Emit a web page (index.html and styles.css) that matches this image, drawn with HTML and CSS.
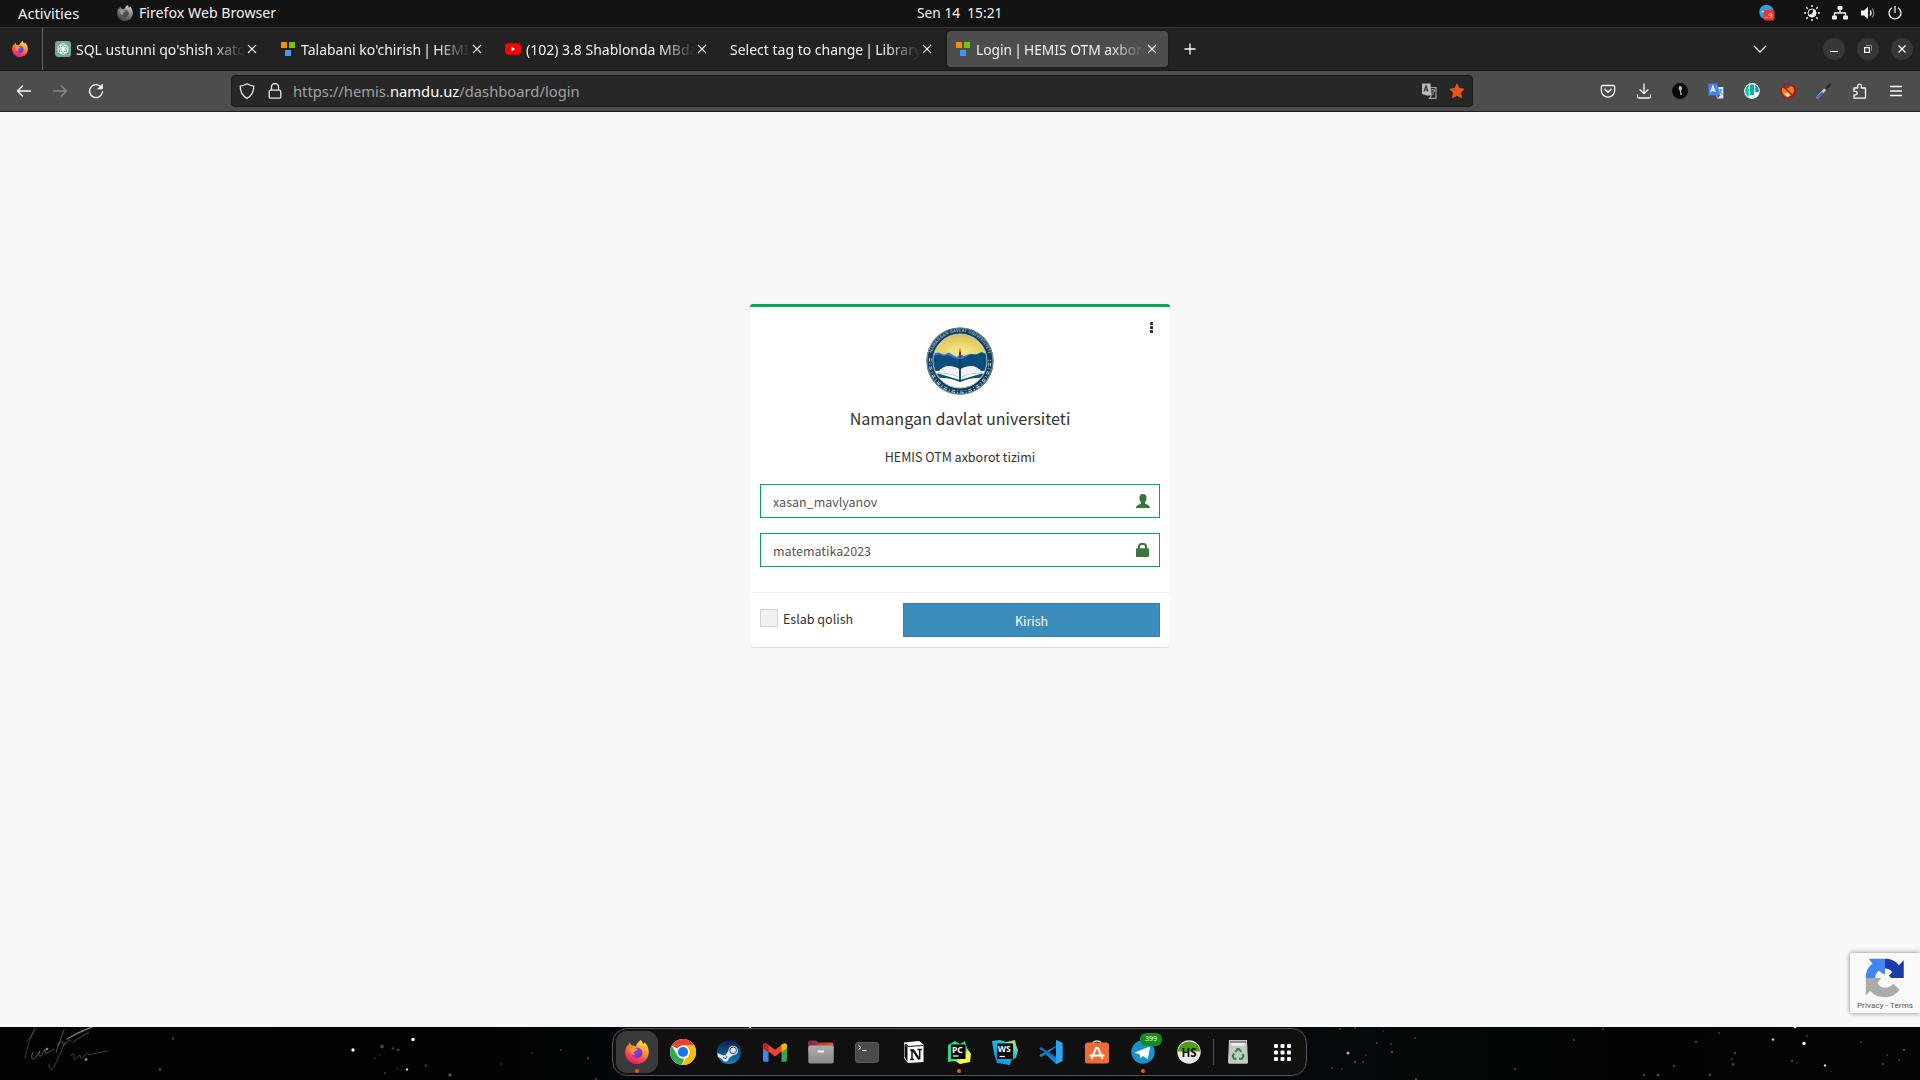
FILE: index.html
```html
<!DOCTYPE html>
<html lang="uz">
<head>
<meta charset="utf-8">
<title>Login | HEMIS OTM axborot tizimi</title>
<link rel="stylesheet" href="styles.css">
</head>
<body>
<svg width="0" height="0" class="defs">
  <defs>
    <linearGradient id="fxBody" x1=".8" y1="0" x2=".3" y2="1"><stop offset="0" stop-color="#fff44f"/><stop offset=".35" stop-color="#ffa02e"/><stop offset=".7" stop-color="#ff4a45"/><stop offset="1" stop-color="#e3158c"/></linearGradient>
    <linearGradient id="fxGlobe" x1="0" y1="0" x2="1" y2="1"><stop offset="0" stop-color="#a050f0"/><stop offset="1" stop-color="#5a35c8"/></linearGradient>
    <linearGradient id="steamBg" x1="0" y1="0" x2="0" y2="1"><stop offset="0" stop-color="#0c1b4b"/><stop offset="1" stop-color="#1483b8"/></linearGradient>
    <linearGradient id="fileTop" x1="0" y1="0" x2="1" y2="0"><stop offset="0" stop-color="#80264f"/><stop offset="1" stop-color="#e2562a"/></linearGradient>
    <linearGradient id="fileBody" x1="0" y1="0" x2="0" y2="1"><stop offset="0" stop-color="#adadad"/><stop offset="1" stop-color="#8a8a8a"/></linearGradient>
    <linearGradient id="pcBg" x1="0" y1="0" x2="1" y2="1"><stop offset="0" stop-color="#21d789"/><stop offset=".55" stop-color="#2ddb85"/><stop offset=".7" stop-color="#fcf84a"/></linearGradient>
    <linearGradient id="wsBg" x1="1" y1="0" x2="0" y2="1"><stop offset="0" stop-color="#f6f04a"/><stop offset=".35" stop-color="#17c9d6"/><stop offset="1" stop-color="#087cfa"/></linearGradient>
    <radialGradient id="sun" cx=".5" cy=".75" r=".8"><stop offset="0" stop-color="#f7ee8b"/><stop offset="1" stop-color="#d4b64c"/></radialGradient>
    <symbol id="fox" viewBox="0 0 24 24">
      <path fill="url(#fxBody)" d="M15.6 0c1.400 1.400 2.200 2.800 2.400 4.100 1-.5 1.300-1.200 1.400-1.900 2.700 2.400 4.400 6 4.400 9.800C23.800 18.600 18.500 24 12 24S.2 18.800.2 12.200c0-2.800 1-5.300 2.300-7.200.1.700.3 1.200.6 1.600.3-1.700 1-3.200 2-4.300.1 1.500.7 2.400 1.500 3.200 1.700-.2 3 .1 4.200.9 1-2.600 2.600-4.600 4.800-6.400z"/>
      <circle cx="12" cy="12.800" r="5.400" fill="url(#fxGlobe)"/>
      <path fill="#ff9a2c" d="M4.500 9c2.500-1.600 5.500-1.200 8 .6-1 1.500-2.600 1.300-3.400 2.100-.9.900-.4 2.500 1 3.100-2.700.5-5.400-1.600-5.600-5.800z"/>
    </symbol>
    <symbol id="hemis" viewBox="0 0 16 16"><path fill="#ff8c00" d="M1 1h6v6H1z"/><path fill="#73c800" d="M9 1h6v6H9z"/><path fill="#4596ee" d="M5 9h6v6H5z"/></symbol>
    <symbol id="x" viewBox="0 0 10 10"><path d="M1 1l8 8M9 1L1 9" stroke="#f0f0f0" stroke-width="1.100" fill="none"/></symbol>
  </defs>
</svg>

<header class="topbar">
  <span class="activities">Activities</span>
  <span class="app"><svg class="gray" width="16" height="16"><use href="#fox"/></svg><span>Firefox Web Browser</span></span>
  <span class="clock">Sen 14&nbsp; 15:21</span>
  <div class="tray">
    <svg width="18" height="18" viewBox="0 0 18 18"><circle cx="8.500" cy="8" r="7.300" fill="#2a9fdc"/><path d="M3 8l6-3v4z" fill="#fff"/><rect x="5.500" y="5.500" width="11" height="11" rx="2.500" fill="#e93430"/><path d="M7 13.500h1M9 13.500h1" stroke="#fff"/><text x="10.500" y="14" font-size="7" fill="#fff">9</text></svg>
    <svg class="sun" width="16" height="16" viewBox="0 0 16 16" stroke="#eee" stroke-width="1.500"><path d="M8 0v2M8 14v2M0 8h2M14 8h2M2.300 2.300l1.500 1.500M12.200 12.200l1.500 1.500M2.300 13.700l1.500-1.500M12.200 3.800l1.500-1.500"/><path d="M9 4a4.200 4.200 0 1 1-5 5.500C7 10.500 9.800 8 9 4z" fill="#eee" stroke="none"/><circle cx="8" cy="8" r="4" fill="none" stroke-width="1"/></svg>
    <svg class="net" width="16" height="16" viewBox="0 0 16 16" fill="#f2f2f2"><rect x="5.500" y="1" width="5" height="4" rx="1"/><rect x="0" y="10.500" width="5" height="4" rx="1"/><rect x="11" y="10.500" width="5" height="4" rx="1"/><path d="M8 5v3M2.500 11V8h11v3" fill="none" stroke="#f2f2f2" stroke-width="1.300"/></svg>
    <svg class="vol" width="16" height="16" viewBox="0 0 16 16"><path d="M1 5.500h3L8 2v12l-4-3.500H1z" fill="#f2f2f2"/><path d="M9.800 5.500c1.400 1.400 1.400 3.600 0 5" fill="none" stroke="#f2f2f2" stroke-width="1.400"/><path d="M12 3.500c2.500 2.500 2.500 6.500 0 9" fill="none" stroke="#777" stroke-width="1.300"/></svg>
    <svg class="pow" width="16" height="16" viewBox="0 0 16 16" fill="none" stroke="#eee" stroke-width="1.300"><path d="M8 1v7M5 2.700a6 6 0 1 0 6 0"/></svg>
  </div>
</header>

<nav class="tabs">
  <div class="pinned"><svg width="16" height="16"><use href="#fox"/></svg></div>
  <div class="tab">
    <svg width="16" height="16" viewBox="0 0 16 16"><rect width="16" height="16" rx="3" fill="#74aa9c"/><g fill="none" stroke="#fff" stroke-width=".8"><ellipse cx="8" cy="5.600" rx="2.600" ry="3"/><ellipse cx="8" cy="5.600" rx="2.600" ry="3" transform="rotate(60 8 8)"/><ellipse cx="8" cy="5.600" rx="2.600" ry="3" transform="rotate(120 8 8)"/><ellipse cx="8" cy="5.600" rx="2.600" ry="3" transform="rotate(180 8 8)"/><ellipse cx="8" cy="5.600" rx="2.600" ry="3" transform="rotate(240 8 8)"/><ellipse cx="8" cy="5.600" rx="2.600" ry="3" transform="rotate(300 8 8)"/></g></svg>
    <span class="title">SQL ustunni qo'shish xato</span><svg width="10" height="10"><use href="#x"/></svg>
  </div>
  <div class="tab"><svg width="16" height="16"><use href="#hemis"/></svg><span class="title">Talabani ko'chirish <span class="bar">|</span> HEMI</span><svg width="10" height="10"><use href="#x"/></svg></div>
  <div class="tab"><svg width="16" height="16" viewBox="0 0 16 16"><rect y="2.300" width="16" height="11.400" rx="3" fill="#f00"/><path d="M6.500 5.800v4.400L10.200 8z" fill="#fff"/></svg><span class="title">(102) 3.8 Shablonda MBda</span><svg width="10" height="10"><use href="#x"/></svg></div>
  <div class="tab"><span class="title wide">Select tag to change <span class="bar">|</span> Library</span><svg width="10" height="10"><use href="#x"/></svg></div>
  <div class="tab active"><svg width="16" height="16"><use href="#hemis"/></svg><span class="title tight">Login <span class="bar">|</span> HEMIS OTM axboro</span><svg width="10" height="10"><use href="#x"/></svg></div>
  <svg class="plus" width="12" height="12" viewBox="0 0 12 12"><path d="M6 .5v11M.5 6h11" stroke="#fff" stroke-width="1.300"/></svg>
  <div class="window">
    <svg class="chev" width="14" height="8" viewBox="0 0 14 8"><path d="M1 1l6 6 6-6" fill="none" stroke="#eee" stroke-width="1.400"/></svg>
    <svg width="22" height="22" viewBox="0 0 22 22"><circle cx="11" cy="11" r="11" fill="#373737"/><path d="M7 13.500h8" stroke="#fff"/></svg>
    <svg width="22" height="22" viewBox="0 0 22 22"><circle cx="11" cy="11" r="11" fill="#373737"/><path d="M9 7.500h5.500V13" fill="none" stroke="#888"/><rect x="7.600" y="9.600" width="4.800" height="4.800" fill="none" stroke="#fff" stroke-width="1.200"/></svg>
    <svg width="22" height="22" viewBox="0 0 22 22"><circle cx="11" cy="11" r="11" fill="#373737"/><path d="M7.500 7.500l7 7M14.500 7.500l-7 7" stroke="#fff" stroke-width="1.300"/></svg>
  </div>
</nav>

<div class="toolbar">
  <div class="navbtns">
    <svg width="16" height="16" viewBox="0 0 16 16" fill="none" stroke="#fbfbfb" stroke-width="1.300" stroke-linecap="round" stroke-linejoin="round"><path d="M1.500 8h13M6.500 3l-5 5 5 5"/></svg>
    <svg width="16" height="16" viewBox="0 0 16 16" fill="none" stroke="#8b8b8b" stroke-width="1.300" stroke-linecap="round" stroke-linejoin="round"><path d="M1.500 8h13M9.500 3l5 5-5 5"/></svg>
    <svg width="16" height="16" viewBox="0 0 16 16" fill="none" stroke="#fbfbfb" stroke-width="1.400" stroke-linecap="round"><path d="M13.500 4.500A6.500 6.500 0 1 0 14.500 9"/><path d="M14.300 1.700v4.100h-4.100z" fill="#fbfbfb" stroke-width="1"/></svg>
  </div>
  <div class="url">
    <svg width="16" height="16" viewBox="0 0 16 16" fill="none" stroke="#e8e8e8" stroke-width="1.300" stroke-linejoin="round"><path d="M8 .8c2 1.300 4.300 2 6.800 2.300 0 6-2.300 10-6.800 12.200C3.500 13.100 1.200 9.100 1.200 3.100 3.700 2.800 6 2.100 8 .8z"/></svg>
    <svg class="lock" width="16" height="16" viewBox="0 0 16 16" fill="none" stroke="#e8e8e8" stroke-width="1.300"><rect x="2.200" y="7.200" width="11.600" height="8" rx="1.500"/><path d="M4.500 7V4a3.500 3.500 0 0 1 7 0v3"/></svg>
    <span class="address">https://hemis.<b>namdu.uz</b>/dashboard/login</span>
    <svg class="translate" width="16" height="16" viewBox="0 0 16 16"><path d="M1 .5h8.500l1.300 12H6L1 11z" fill="#bababa"/><path d="M3 8.500L5 3l2 5.500M3.700 7h2.600" fill="none" stroke="#333" stroke-width="1.200"/><path d="M9.500 4.500H15v10.800H8.500l2-2.800" fill="none" stroke="#a5a5a5" stroke-width="1.200"/><text x="10.200" y="12" font-size="8" font-weight="bold" fill="#aaa">?</text></svg>
    <svg width="16" height="16" viewBox="0 0 16 16"><path fill="#e95420" stroke="#e95420" stroke-linejoin="round" d="M8 1l2.200 4.500 4.900.7-3.600 3.500.9 4.900L8 12.300l-4.400 2.300.9-4.900L.9 6.200l4.900-.7z"/></svg>
  </div>
  <div class="exts">
    <svg width="16" height="16" viewBox="0 0 16 16" fill="none" stroke="#fbfbfb" stroke-width="1.300" stroke-linecap="round" stroke-linejoin="round"><path d="M2.800 2.500h10.400c.8 0 1.500.6 1.500 1.400V7.500a6.700 6.700 0 0 1-13.400 0V3.900c0-.8.700-1.400 1.500-1.400z"/><path d="M4.800 6.300L8 9.300l3.200-3"/></svg>
    <svg width="16" height="16" viewBox="0 0 16 16" fill="none" stroke="#fbfbfb" stroke-width="1.300" stroke-linecap="round"><path d="M8 1v9.500M4 6.700l4 4 4-4M1.500 12v1.500c0 .8.700 1.500 1.500 1.500h10c.8 0 1.500-.7 1.500-1.500V12"/></svg>
    <svg width="16" height="16" viewBox="0 0 16 16"><circle cx="8" cy="8" r="7.900" fill="#080808"/><path d="M7 3.500c1.500-1 3 0 3 1.500 0 1.800-1 2.300-1 3.600L10 12H8.300L8 8 6.500 6z" fill="#b9b9b9"/></svg>
    <svg width="16" height="16" viewBox="0 0 16 16"><path d="M7 4h8.300v11.500H9z" fill="#e6e6e6"/><path d="M.5.500h8.700l3 11.800H.5z" fill="#4086f4"/><path d="M9 12.300h3.200L9.800 15z" fill="#223d80"/><path d="M2.700 9l2.200-5.800L7.200 9M3.400 7.300h3" fill="none" stroke="#fff" stroke-width="1.200"/><path d="M11 7h3.500M12.800 6v1c0 2-.8 3-1.500 3.500M12 8.500l2.500 3" stroke="#4086f4" fill="none"/></svg>
    <svg width="16" height="16" viewBox="0 0 16 16"><circle cx="8" cy="8" r="7.900" fill="#fff"/><path d="M4.800 1.900v12.200A6.900 6.900 0 0 1 4.800 1.900z" fill="#16c79a"/><path d="M5.800 1.500h4.400v10.700H5.800z" fill="#12a9a4"/><path d="M11.200 2v7.200h3.600A6.900 6.900 0 0 0 11.200 2z" fill="#1e8fc0"/><path d="M11.200 10.200h3.200a6.900 6.900 0 0 1-3.200 3.800z" fill="#dff3f0"/><path d="M5.800 13.200h4.400v1.400H7z" fill="#cdeee8"/></svg>
    <svg width="16" height="16" viewBox="0 0 16 16"><path d="M2 4.500l3 1.300 3-.5 3-2.300 2.500 1.500.5 4-2.500 4L7.500 14l-3.700-2L2 9z" fill="#e8821e"/><path d="M4 11l4-1.500 2 3-2.500 1.500z" fill="#f7ddb8"/><circle cx="8" cy="8" r="7.200" fill="none" stroke="#c40c0c" stroke-width="1.300"/><path d="M3 3l10 10" stroke="#c40c0c" stroke-width="1.300"/></svg>
    <svg width="16" height="16" viewBox="0 0 16 16" fill="none" stroke-linecap="round"><path d="M8.500 7.500l5.500-6" stroke="#26282e" stroke-width="2.500"/><path d="M1.800 14.200L8.500 7" stroke="#c5cbd8" stroke-width="2.600"/><path d="M2 14l4-4" stroke="#2f62d8" stroke-width="2"/></svg>
    <svg width="16" height="16" viewBox="0 0 16 16" fill="none" stroke="#fbfbfb" stroke-width="1.300" stroke-linejoin="round"><path d="M2 5h3.700V3a1.800 1.800 0 0 1 3.600 0v2H13.500v10.200H2v-3.400h1.500a1.700 1.700 0 0 0 0-3.400H2z"/></svg>
    <svg width="16" height="16" viewBox="0 0 16 16" stroke="#fbfbfb" stroke-width="1.300" stroke-linecap="round"><path d="M2.500 3.500h11M2.500 8h11M2.500 12.500h11"/></svg>
  </div>
</div>

<main class="page">
  <form class="card">
    <div class="card-body">
      <svg class="menu" width="3" height="11" viewBox="0 0 3 11" fill="#333"><rect width="3" height="3" rx=".5"/><rect y="4" width="3" height="3" rx=".5"/><rect y="8" width="3" height="3" rx=".5"/></svg>
      <svg class="logo" width="80" height="80" viewBox="0 0 80 80">
        <defs><path id="ring" d="M10.800 40a29.200 29.200 0 0 1 58.400 0"/><clipPath id="disc"><circle cx="40" cy="40" r="26.500"/></clipPath></defs>
        <rect width="80" height="80" fill="#fefefe"/>
        <circle cx="40" cy="40" r="33.500" fill="#123e5c"/>
        <circle cx="40" cy="40" r="33" fill="none" stroke="#6e8b9b" stroke-width="1.200"/>
        <circle cx="40" cy="40" r="27" fill="#fcfdfb" stroke="#a9bfc6" stroke-width="1"/>
        <g clip-path="url(#disc)">
          <path d="M13 12h54v26H13z" fill="url(#sun)"/>
          <path d="M13 32l6-.5 5 2 5-2 4 2.500 4 2 3-3 4 2 5-2 5 1.500 6-3 6 1v12H13z" fill="#3d76d8"/>
          <path d="M13 35l6-1.500 5 1.500 4-1 6 3 6 1.500 6-2.500 5-3 6 .5 5-2.500 5 3v16H13z" fill="#0a4f7c"/>
          <path d="M13 52l7 1 20 6 20-6 7-1v5c-9-1-19 0-27 4-8-4-18-5-27-4z" fill="#0f5674"/>
          <path d="M18 51c4-5 8-6.500 12-6 4 .3 8 1.500 10 4 2-2.500 6-3.700 10-4 4-.5 8 1 12 6-7 .3-16 1-22 5-6-4-15-4.700-22-5z" fill="#f0f4fa"/>
          <path d="M18 52c8 0 16 1 22 5 6-4 14-5 22-5" fill="none" stroke="#b8ccd2" stroke-width="1"/>
          <path d="M40 38v23" stroke="#0b4255" stroke-width="1.800"/><path d="M40 30v7" stroke="#6b3a28" stroke-width="2"/><path d="M40 27.500v3" stroke="#f08b25" stroke-width="2"/>
        </g>
        <path d="M10.500 37A29.800 29.800 0 1 0 69.500 37" fill="none" stroke="#d7e1e6" stroke-width="2.600" stroke-dasharray="3.500 2 1 2"/>
        <path d="M10.500 37A29.800 29.800 0 1 0 69.500 37" fill="none" stroke="#123e5c" stroke-width="1"/>
        <text class="ring-text"><textPath href="#ring" startOffset="8" textLength="76">NAMANGAN DAVLAT UNIVERSITETI</textPath></text>
      </svg>
      <h1>Namangan davlat universiteti</h1>
      <p class="sub">HEMIS OTM axborot tizimi</p>
      <div class="field"><span>xasan_mavlyanov</span><svg width="14" height="14" viewBox="0 0 14 14" fill="#3c763d"><path d="M7 0c2.300 0 3.600 1.600 3.600 3.900 0 1.800-.7 3.400-1.600 4.300v1.300c1.300.9 5 1.400 5 4.500H0c0-3.100 3.700-3.600 5-4.500V8.200c-.9-.9-1.600-2.500-1.600-4.300C3.400 1.600 4.700 0 7 0z"/></svg></div>
      <div class="field"><span>matematika2023</span><svg width="14" height="14" viewBox="0 0 14 14" fill="#3c763d"><path d="M0 6.500C0 5.700.4 5.300 1 5.300h1V3.600C2 1.300 3.300 0 5.300 0h2.400C9.700 0 11 1.300 11 3.600v1.700h1c.6 0 1 .4 1 1.200V13c0 .6-.4 1-1 1H1c-.6 0-1-.4-1-1zM4 5.300h5V3.800C9 2.700 8.500 2 7.500 2h-2C4.500 2 4 2.700 4 3.800z"/></svg></div>
    </div>
    <div class="card-footer">
      <label class="remember"><i></i><span>Eslab qolish</span></label>
      <button type="button">Kirish</button>
    </div>
  </form>
  <aside class="captcha">
    <svg width="40" height="40" viewBox="0 0 64 64"><path fill="#1c3aa9" d="M62 31.900V3.400l-7.800 8C47.900 3.500 39.800 1.300 32 1.300v15.300c5 0 8.500 1.500 11.500 6.200L38 28c3 2.500 3 3.900 4 3.900z"/><path fill="#4285f4" d="M32 1.300H6l6 7.500C4.500 15 1.300 22 1.300 32h15.200c0-5 1.500-8.500 5.500-11.500l8 5.500c2-.5 2-1.400 2-2.500z"/><path fill="#ababab" d="M1.300 32v28l7-7.500c7 8.500 15 10.200 23.700 10.200 9 0 17.500-4 23.500-12L45 41c-3 4.500-8 6.500-13 6.500s-10-3-12-8l6-7.500z"/></svg>
    <span>Privacy - Terms</span>
  </aside>
</main>

<footer class="desktop">
  <svg class="sky" width="1920" height="53" viewBox="0 1027 1920 53">
    <g fill="none" stroke="#8a8a8a" stroke-linecap="round" stroke-width="1">
      <path d="M35 1027c-5 12-8 20-10 31M26 1042c4-4 8-10 11-14" opacity=".4"/>
      <path d="M33 1052c-2 4-2 8 1 7 3-2 4-6 6-8-2 4-1 6 1 5l4-7c0 3 0 6 2 4l7-4M56 1052l8-22M57 1045c4-3 5-4 6-2s2 2 4-1c2-2 3-3 4-1" opacity=".6"/>
      <path d="M67 1039l11-6 14-6" opacity=".9" stroke-width="1.400"/><path d="M73 1042l16-10" opacity=".5"/>
      <path d="M65 1042c-3 8-8 18-11 25-2 4-6 2-5-3M70 1056c3-4 5-2 4 1s1 3 3 1l3-3c0 4 2 4 4 1s4-3 5-1c5-2 9-2 18-4" opacity=".45"/>
    </g>
    <g fill="#fff">
      <circle cx="353" cy="1050" r="1.700"/><circle cx="413" cy="1039.500" r="1.700"/><circle cx="407" cy="1069.500" r="1.200" opacity=".8"/><circle cx="47" cy="1049" r="1.300" opacity=".5"/><circle cx="86" cy="1059.500" r="1.500" opacity=".5"/>
      <circle cx="1348" cy="1053" r="1.500" opacity=".7"/><circle cx="1804" cy="1043.500" r="1.700"/><circle cx="1773" cy="1039.500" r="1.200" opacity=".8"/><circle cx="1825" cy="1065.500" r="1.200" opacity=".8"/><circle cx="1795" cy="1027" r="1.300"/><circle cx="750" cy="1027" r="1"/>
    </g>
    <g fill="#8f9698" opacity=".42">
      <circle cx="382" cy="1046.500" r="2"/><circle cx="393" cy="1048.500" r="1.300"/><circle cx="398" cy="1050" r="1.300"/><circle cx="160" cy="1069.500" r="1.400"/><circle cx="173" cy="1038.500" r="1.200"/><circle cx="426" cy="1065.500" r="1.200"/><circle cx="588" cy="1058" r="1.200"/><circle cx="450" cy="1075" r="1.700" fill="#8fe0e2"/><circle cx="385" cy="1073" r="1"/><circle cx="397" cy="1069" r=".8"/><circle cx="375" cy="1058" r=".8"/><circle cx="380" cy="1055" r=".8"/><circle cx="501" cy="1064" r=".9"/><circle cx="532" cy="1053" r=".8"/><circle cx="561" cy="1050" r=".9"/><circle cx="596" cy="1079" r="1.400" fill="#3c7ba0"/>
      <circle cx="1340" cy="1029" r="1"/><circle cx="1355" cy="1028" r="1"/><circle cx="1355" cy="1062" r="1.300"/><circle cx="1363" cy="1062" r="1.100"/><circle cx="1377" cy="1043" r="1.100"/><circle cx="1391" cy="1044" r="1"/><circle cx="1392" cy="1052" r="1.300"/><circle cx="1383" cy="1031" r=".8"/><circle cx="1415" cy="1038" r="1"/><circle cx="1366" cy="1055" r=".8"/><circle cx="1332" cy="1068" r=".9"/><circle cx="1342" cy="1069" r=".8"/><circle cx="1416" cy="1079" r="1.200"/><circle cx="1515" cy="1069" r="1"/><circle cx="1574" cy="1040" r="1"/><circle cx="1603" cy="1029" r="1"/><circle cx="1644" cy="1075" r="1.200"/><circle cx="1658" cy="1075" r="1.600"/><circle cx="1674" cy="1066" r="1.300"/><circle cx="1696" cy="1042" r="1.300"/><circle cx="1719" cy="1033" r=".9"/><circle cx="1733" cy="1064.500" r="1.400"/><circle cx="1735" cy="1053" r="1.200"/><circle cx="1710" cy="1075" r="1.400"/><circle cx="1732" cy="1059" r=".9"/><circle cx="1807" cy="1036" r="1"/><circle cx="1792" cy="1061" r="1.200"/><circle cx="1797" cy="1063" r=".8"/><circle cx="1861" cy="1042" r="1"/><circle cx="1883" cy="1064" r="1.100"/><circle cx="1904" cy="1050" r="1.200"/><circle cx="1899" cy="1060" r="1"/><circle cx="1887" cy="1055" r=".9"/>
    </g>
  </svg>
  <div class="dock">
    <div class="item current run"><svg width="24" height="24"><use href="#fox"/></svg></div>
    <div class="item"><svg width="26" height="26" viewBox="0 0 26 26"><circle cx="13" cy="13" r="13" fill="#fff"/><path d="M13 0c4.800 0 9 2.600 11.300 6.500H13A6.500 6.500 0 0 0 7.400 9.700L1.700 6.500A13 13 0 0 1 13 0z" fill="#ea4335"/><path d="M1.700 6.500l5.700 9.800A6.500 6.500 0 0 0 14.700 19.200L11.300 25.900A13 13 0 0 1 1.700 6.500z" fill="#34a853"/><path d="M24.300 6.500A13 13 0 0 1 11.300 25.900l7.300-9.600A6.500 6.500 0 0 0 13 6.500z" fill="#fbbc05"/><circle cx="13" cy="13" r="6.500" fill="#fff"/><circle cx="13" cy="13" r="5.100" fill="#1a73e8"/></svg></div>
    <div class="item"><svg width="24" height="24" viewBox="0 0 24 24"><circle cx="12" cy="12" r="12" fill="url(#steamBg)"/><path d="M.3 13l6.200 2.600c.6-.4 1.200-.5 2-.5l3-4.300c0-3 2-5 4.700-5A4.800 4.800 0 0 1 21 10.500c0 2.800-2.300 4.800-5 4.700l-4.200 3c0 2-1.500 3.400-3.400 3.400-1.600 0-3-1.100-3.300-2.600L.9 17z" fill="#e4e9f1"/><circle cx="16.200" cy="10.300" r="3.300" fill="none" stroke="#1e4077" stroke-width="1"/><path d="M6 17.500l2 .9a1.500 1.500 0 0 0 1-2.800" fill="none" stroke="#1e5b94"/></svg></div>
    <div class="item"><svg width="24" height="19" viewBox="0 0 24 19"><path d="M0 3l5.500 4v11.800H1.700C.7 18.800 0 18 0 17z" fill="#4285f4"/><path d="M24 3l-5.500 4v11.800h3.800c1 0 1.700-.8 1.700-1.800z" fill="#34a853"/><path d="M0 2.500C0 .5 2.300-.5 4 .8l8 6 8-6v6.700l-8 6-6.500-5L0 6z" fill="#ea4335"/><path d="M18.500 2l1.500-1.200c1.700-1.300 4-.3 4 1.700V5l-5.500 4z" fill="#fbbc04"/><path d="M0 2.500V5.500l5.500 4V2L4 .8C2.300-.5 0 .5 0 2.500z" fill="#c5221f"/></svg></div>
    <div class="item"><svg width="26" height="24" viewBox="0 0 26 24"><path d="M0 2.500C0 1.200 1 .5 2 .5h6l2 2h13.500c1.200 0 2 .8 2 2V12H0z" fill="url(#fileTop)"/><rect x=".3" y="5.500" width="25.400" height="18" rx="2" fill="url(#fileBody)"/><rect x="9.500" y="10.500" width="6.500" height="2" fill="#f2f2f2"/></svg></div>
    <div class="item"><svg width="24" height="21" viewBox="0 0 24 21"><rect x=".5" y=".5" width="23" height="20" rx="2.500" fill="#4b4b4b" stroke="#5b5b5b"/><path d="M3.500 3.500L6 5.500l-2.500 2M7 8.500h4.500" fill="none" stroke="#e9e9e9"/></svg></div>
    <div class="item notion"><svg width="20" height="22" viewBox="0 0 20 22"><path d="M0 1.500L15 0l4.500 3.500V21L4 22 0 17z" fill="#fff"/><path d="M1.500 3L4 5.500 19 4.500" fill="none" stroke="#111" stroke-width="1.200"/><path d="M.5 3v13l3 4.500V6z" fill="#111"/><path d="M6 9h3.500l5.500 8.500M6 18.500h4M8 9.500v9M13.500 8.500H18M8.500 9l6.500 9.500M15.700 9v9.500" fill="none" stroke="#111" stroke-width="1.500"/></svg></div>
    <div class="item run"><svg width="24" height="24" viewBox="0 0 24 24"><path d="M1 5l7-4 5 3 5-3 2 7 4 6-1 8-10 2-5-3-7 1z" fill="url(#pcBg)"/><rect x="4" y="4.500" width="14.500" height="14.500" fill="#050505"/><text class="ide" x="5" y="12.500">PC</text><path d="M6 16h5.500" stroke="#fff" stroke-width="1.300"/></svg></div>
    <div class="item"><svg width="26" height="26" viewBox="0 0 26 26"><path d="M0 2l8-1 6 2 9-2 1 5 2 5-2 8-5 2-1 5-13-2-3-9z" fill="url(#wsBg)"/><rect x="5" y="4.500" width="16" height="15.500" fill="#050505"/><text class="ide" x="5.800" y="13">WS</text><path d="M7.500 17.500H13" stroke="#fff" stroke-width="1.300"/></svg></div>
    <div class="item"><svg width="24" height="24" viewBox="0 0 24 24"><path d="M17 0l6.500 3v18L17 24 6.500 14 2.500 17 .5 16V15l16.500-9z" fill="#1c86d1"/><path d="M17 24l6.500-3V3L17 0z" fill="#2aa4f0"/><path d="M.5 8v1L17 19v-1.500L2.500 7z" fill="#0d6db8"/><path d="M17 7v10l-7-5z" fill="#111"/><path d="M5 12l-2.500-2.200L.7 12l1.800 2.200z" fill="#111"/></svg></div>
    <div class="item"><svg width="24" height="24" viewBox="0 0 24 24"><path d="M8 4c0-4 8-4 8 0" fill="none" stroke="#d8cfbd" stroke-width="1.500"/><rect y="2.500" width="24" height="21" rx="2.500" fill="#ee6c3a"/><path d="M6.500 19L11 8h2l4.500 11M4.500 15.500h15" fill="none" stroke="#fff" stroke-width="2"/></svg></div>
    <div class="item run"><svg width="24" height="24" viewBox="0 0 24 24"><circle cx="12" cy="12" r="11.700" fill="#1c90cb"/><path d="M4 12.500l14-5.700c.8-.2 1.200.2 1 1L17 18c-.2.800-.8.900-1.400.5l-3.500-2.500-1.800 1.700c-.5.400-.9.200-1-.4l-.6-3-4.500-1.200c-.5-.2-.6-.4-.2-.6z" fill="#fff"/></svg><span class="badge">399</span></div>
    <div class="item"><svg width="24" height="24" viewBox="0 0 24 24"><circle cx="12" cy="12" r="11.700" fill="#e9ebe8"/><path d="M.5 11.500a11.600 11.600 0 0 1 23 0z" fill="#4f9e12"/><text class="hs" x="4.500" y="16.500" textLength="15">HS</text></svg></div>
    <i class="sep"></i>
    <div class="item"><svg width="20" height="24" viewBox="0 0 20 24"><path d="M1 0h18l1 22c0 1-.7 1.800-1.600 1.800H1.600C.7 23.800 0 23 0 22z" fill="#c6c8c7"/><path d="M2 1.500h16v1.300H2z" fill="#555"/><path d="M3 2.800h14l-1 3H4z" fill="#eee"/><g fill="none" stroke="#1f8a3a" stroke-width="2"><path d="M7.500 12l2-3h1.500l2 3M14.500 14l1 2-1.500 2.800h-3M8.500 18.800H6L4.700 16l1.500-2.500"/></g></svg></div>
    <div class="apps"><svg width="17" height="17" viewBox="0 0 17 17" fill="#fff"><rect width="4" height="4" rx="1"/><rect x="6.500" width="4" height="4" rx="1"/><rect x="13" width="4" height="4" rx="1"/><rect y="6.500" width="4" height="4" rx="1"/><rect x="6.500" y="6.500" width="4" height="4" rx="1"/><rect x="13" y="6.500" width="4" height="4" rx="1"/><rect y="13" width="4" height="4" rx="1"/><rect x="6.500" y="13" width="4" height="4" rx="1"/><rect x="13" y="13" width="4" height="4" rx="1"/></svg></div>
  </div>
</footer>
</body>
</html>
```
FILE: styles.css
```css
* { box-sizing: border-box; }
body {
  margin: 0;
  width: 1920px;
  height: 1080px;
  overflow: hidden;
  display: flex;
  flex-direction: column;
  font-family: "Noto Sans", "Open Sans", sans-serif;
  background: #000;
  color: #f2f2f2;
}
svg { display: block; flex: none; }
.defs { position: absolute; }

/* Desktop top bar */
.topbar {
  flex: 0 0 27px;
  display: grid;
  grid-template-columns: 117px 800px 85px 1fr;
  align-items: center;
  background: #131313;
  font-size: 14.200px;
  line-height: 26px;
  padding-bottom: 1px;
  white-space: nowrap;
}
.activities { padding-left: 18px; font-size: 14.700px; }
.app { display: flex; align-items: center; gap: 6px; }
.gray { filter: grayscale(1) brightness(.9); }
.clock { font-size: 13.750px; }
.tray { display: flex; align-items: center; justify-content: flex-end; padding-right: 17px; }
.sun { margin-left: 28px; }
.net { margin-left: 12px; }
.vol { margin-left: 12px; }
.pow { margin-left: 11px; }

/* Tab strip */
.tabs {
  flex: 0 0 44px;
  display: flex;
  align-items: center;
  background: #222;
  border-top: 1px solid #353535;
  border-bottom: 1px solid #171717;
}
.pinned {
  width: 43px;
  height: 100%;
  display: flex;
  align-items: center;
  padding-left: 12px;
  border-right: 1px solid #666;
  margin-right: 4px;
}
.tab {
  width: 221px;
  height: 36px;
  margin-right: 4px;
  padding: 0 11px 0 8px;
  display: flex;
  align-items: center;
  border-radius: 4px;
}
.tab.active { background: #4d4d4d; box-shadow: 0 0 3px #111; }
.title {
  flex: 1;
  overflow: hidden;
  white-space: nowrap;
  margin-left: 5px;
  font-size: 14px;
  line-height: 34px;
  padding-top: 2px;
  -webkit-mask-image: linear-gradient(to left, transparent 2px, #000 36px);
  mask-image: linear-gradient(to left, transparent 2px, #000 36px);
}
.title.wide { margin-left: 0; }
.title.tight { font-size: 13.800px; }
.bar { margin: 0 -1.500px; }
.plus { margin-left: 12px; }
.window { margin-left: auto; display: flex; align-items: center; gap: 12px; padding-right: 7px; }
.chev { margin-right: 44px; }

/* Toolbar */
.toolbar {
  flex: 0 0 41px;
  display: flex;
  align-items: center;
  background: #4d4d4d;
  border-bottom: 1px solid #1c1c1c;
  padding: 0 16px;
}
.navbtns { display: flex; gap: 20px; margin-right: 127px; }
.url {
  width: 1242px;
  height: 32px;
  display: flex;
  align-items: center;
  padding: 0 7px;
  background: #272727;
  border: 1px solid #1a1a1a;
  border-radius: 4px;
}
.lock { margin-left: 12px; }
.address { flex: 1; margin-left: 10px; font-size: 14.750px; line-height: 28px; color: #a2a2a2; }
.address b { font-weight: 400; color: #fff; }
.translate { margin-right: 12px; }
.exts { display: flex; gap: 20px; margin-left: auto; }

/* Login page */
.page {
  flex: 1;
  position: relative;
  display: flex;
  flex-direction: column;
  align-items: center;
  padding-top: 192px;
  background: #f8f8f8;
  color: #333;
  font-family: "Noto Sans CJK SC", "Noto Sans", sans-serif;
  font-size: 12.500px;
}
.card {
  width: 420px;
  background: #fff;
  border-top: 3px solid #00a65a;
  border-radius: 3px;
  box-shadow: 0 1px 1px rgba(0, 0, 0, .1), 0 0 2px rgba(0, 0, 0, .05);
}
.card-body {
  position: relative;
  height: 285px;
  padding: 14px 10px 0;
  display: flex;
  flex-direction: column;
  align-items: center;
}
.menu { position: absolute; right: 17px; top: 15px; }
.ring-text { font: 700 4px "Noto Sans", sans-serif; fill: #9fb4c0; }
h1 { margin: 5px 0 0; font-size: 16.100px; font-weight: 400; line-height: 24px; }
.sub { margin: 17px 0 17px; line-height: 20px; }
.field {
  width: 400px;
  height: 34px;
  margin-bottom: 15px;
  padding: 0 10px 0 12px;
  display: flex;
  align-items: center;
  justify-content: space-between;
  border: 1px solid #00a65a;
  color: #555;
}
.field svg { margin-right: -1px; }
.card-footer {
  display: flex;
  justify-content: space-between;
  padding: 10px;
  border-top: 1px solid #f1f1f1;
}
.remember { display: flex; align-items: center; gap: 5px; height: 30px; }
.remember i { width: 18px; height: 18px; background: #f1f1f1; border: 1px solid #d2d2d2; }
button {
  width: 257px;
  height: 34px;
  border: 1px solid #367fa9;
  background: #3c8dbc;
  color: #fff;
  font: inherit;
  padding: 0;
}
.captcha {
  position: absolute;
  right: 0;
  bottom: 14px;
  width: 70px;
  height: 60px;
  padding-top: 5px;
  display: flex;
  flex-direction: column;
  align-items: center;
  background: #f9f9f9;
  border-radius: 2px 0 0 2px;
  box-shadow: 0 0 5px gray;
  font: 8px/15px Roboto, sans-serif;
  letter-spacing: .12px;
  color: #555;
}

/* Desktop and dock */
.desktop {
  flex: 0 0 53px;
  position: relative;
  display: flex;
  padding: 1px 0 0 612px;
  background: linear-gradient(90deg, #020303 0, #010202 24%, #03090c 36%, #04090b 70%, #020404 85%, #030506);
}
.sky { position: absolute; left: 0; top: 0; }
.dock {
  position: relative;
  width: 695px;
  height: 48px;
  display: flex;
  align-items: center;
  padding-left: 1px;
  background: #101010;
  border: 1px solid #555;
  border-radius: 15px;
}
.item {
  position: relative;
  flex: 0 0 46px;
  height: 46px;
  display: flex;
  align-items: center;
  justify-content: center;
}
.current::before {
  content: "";
  position: absolute;
  inset: 2px;
  border-radius: 11px;
  background: #3a3a3a;
}
.item svg { position: relative; }
.notion { padding-left: 2px; }
.run::after {
  content: "";
  position: absolute;
  left: 21px;
  bottom: 2px;
  width: 4px;
  height: 4px;
  border-radius: 50%;
  background: #e95420;
}
.badge {
  position: absolute;
  left: 20px;
  top: 4px;
  width: 22px;
  height: 13px;
  border-radius: 6px;
  background: #0f8f1f;
  color: #fff;
  font-size: 7px;
  line-height: 12px;
  text-align: center;
}
.ide { font: 700 8.500px "Noto Sans", sans-serif; fill: #fff; }
.hs { font: 700 11.500px "Noto Sans", sans-serif; fill: #111; }
.sep { width: 1px; height: 26px; margin: 0 1px; background: #555; }
.apps { width: 42px; display: flex; justify-content: center; }
```
